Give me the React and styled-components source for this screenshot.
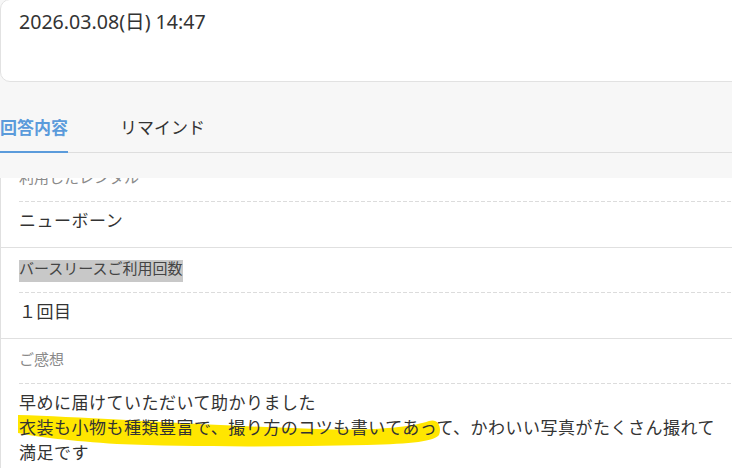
import React from "react";
import styled, { createGlobalStyle } from "styled-components";

const GlobalStyle = createGlobalStyle`
  html, body {
    margin: 0;
    padding: 0;
    background: #f7f7f7;
    overflow: hidden;
  }
  body {
    font-family: "Noto Sans", "Noto Sans CJK JP", sans-serif;
    color: #333;
  }
  * { box-sizing: border-box; }
`;

const Page = styled.div`
  width: 732px;
  height: 468px;
  overflow: hidden;
  background: #f7f7f7;
`;

const DateCard = styled.div`
  height: 83px;
  margin: -1px -24px 0 0;
  background: #fff;
  border: 1px solid #e2e2e2;
  border-radius: 10px;
  padding: 9px 18px 0;
`;

const DateText = styled.div`
  font-family: "Noto Sans", "Noto Sans CJK JP", sans-serif;
  font-size: 19.6px;
  line-height: 26px;
  color: #333;
`;

const TabHeader = styled.div`
  padding-bottom: 25px;
`;

const TabList = styled.div`
  display: flex;
  gap: 52px;
  border-bottom: 1px solid #dedede;
`;

const Tab = styled.div`
  font-family: "Noto Sans CJK JP", sans-serif;
  font-size: 17px;
  line-height: 25px;
  padding: 32px 0 12px;
  margin-bottom: -1px;
  border-bottom: 2px solid ${(p) => (p.$active ? "#5b9bdb" : "transparent")};
  color: ${(p) => (p.$active ? "#5b9bdb" : "#333")};
  font-weight: ${(p) => (p.$active ? 700 : 400)};
`;

const Panel = styled.div`
  background: #fff;
  border-left: 1px solid #e0e0e0;
  overflow: hidden;
  height: 290px;
`;

const Section = styled.div`
  padding: 12px 0 15px 18px;
  border-bottom: 1px solid #e0e0e0;
  margin-top: ${(p) => (p.$first ? "-21px" : "0")};
`;

const Label = styled.div`
  font-family: "Noto Sans CJK JP", sans-serif;
  font-size: 15px;
  line-height: 16px;
  color: #8a8a8a;
  margin-bottom: 16px;
  white-space: nowrap;
`;

const Selected = styled.span`
  color: #444;
  padding-bottom: 4px;
  background: linear-gradient(transparent 3px, #c8c8c8 3px);
`;

const Divider = styled.div`
  height: 1px;
  margin-bottom: 5px;
  background: repeating-linear-gradient(
    90deg,
    #dcdcdc 0 4px,
    transparent 4px 6px
  );
`;

const Value = styled.div`
  position: relative;
  font-family: "Noto Sans CJK JP", sans-serif;
  font-size: 17px;
  letter-spacing: 0.5px;
  line-height: 25px;
  color: #333;
  max-width: 708px;
`;

const ValueText = styled.span`
  position: relative;
  z-index: 1;
`;

const Marker = styled.svg`
  position: absolute;
  left: -2px;
  top: 24px;
  width: 424px;
  height: 36px;
  z-index: 0;
  pointer-events: none;
`;

export default function App() {
  return (
    <>
      <GlobalStyle />
      <Page>
        <DateCard>
          <DateText>2026.03.08(日) 14:47</DateText>
        </DateCard>
        <TabHeader>
          <TabList>
            <Tab $active>回答内容</Tab>
            <Tab>リマインド</Tab>
          </TabList>
        </TabHeader>
        <Panel>
          <Section $first>
            <Label>利用したレンタル</Label>
            <Divider />
            <Value>ニューボーン</Value>
          </Section>
          <Section>
            <Label>
              <Selected>バースリースご利用回数</Selected>
            </Label>
            <Divider />
            <Value>１回目</Value>
          </Section>
          <Section>
            <Label>ご感想</Label>
            <Divider />
            <Value>
              <Marker viewBox="0 0 424 36" aria-hidden="true">
                <path
                  d="M1,2 C70,4 180,12 300,16 C360,18 395,14 412,8 C421,5 425,14 422,22 C418,28 395,31 350,32 C260,34 170,34 100,31 C55,28 20,24 1,20 Z"
                  fill="#ffe600"
                />
              </Marker>
              <ValueText>
                早めに届けていただいて助かりました
                <br />
                衣装も小物も種類豊富で、撮り方のコツも書いてあって、かわいい写真がたくさん撮れて満足です
              </ValueText>
            </Value>
          </Section>
        </Panel>
      </Page>
    </>
  );
}
